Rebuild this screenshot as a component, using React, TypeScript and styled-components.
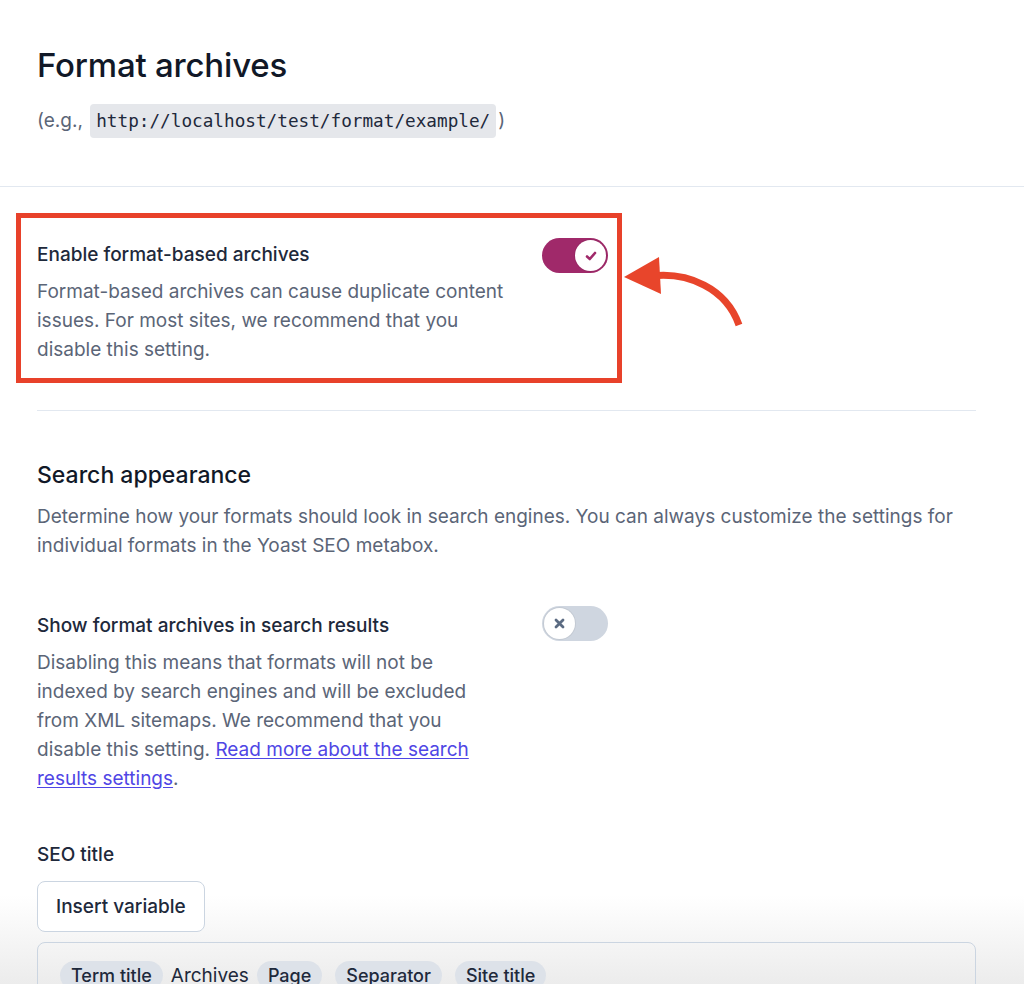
import React from "react";
import styled, { createGlobalStyle } from "styled-components";

const Global = createGlobalStyle`
  html, body { margin: 0; padding: 0; background: #ffffff; }
  body { font-family: Inter, "Noto Sans", sans-serif; color: #1e293b; -webkit-font-smoothing: antialiased; }
  * { box-sizing: border-box; }
`;

const Page = styled.div`
  width: 1024px;
  height: 984px;
  overflow: hidden;
  background: linear-gradient(to bottom, #ffffff 0px, #ffffff 895px, #ececec 984px);
`;

const Header = styled.header`
  padding: 44px 48px 48px 37px;
  border-bottom: 1px solid #e2e8f0;
`;

const Title = styled.h1`
  margin: 0 0 18px;
  font-size: 33px;
  line-height: 42px;
  font-weight: 500;
  color: #111827;
  letter-spacing: -0.2px;
`;

const Example = styled.p`
  margin: 0;
  font-size: 19px;
  line-height: 34px;
  color: #5b6577;
`;

const Code = styled.code`
  font-family: "DejaVu Sans Mono", "Liberation Mono", monospace;
  font-size: 17.7px;
  color: #1e293b;
  background: #e5e7eb;
  border-radius: 4px;
  padding: 7px 6px;
  margin: 0 2px;
`;

const Content = styled.main`
  padding: 26px 48px 0 37px;
`;

const Highlight = styled.div`
  position: relative;
  margin-left: -21px;
  width: 606px;
  border: 5px solid #e8412a;
  padding: 20px 9px 14px 16px;
`;

const Arrow = styled.svg`
  position: absolute;
  left: 597px;
  top: 30px;
  overflow: visible;
`;

const Row = styled.div`
  display: flex;
  align-items: flex-start;
  justify-content: space-between;
  width: 571px;
`;

const RowText = styled.div`
  width: 470px;
`;

const Label = styled.div`
  font-size: 19px;
  line-height: 34px;
  font-weight: 500;
  color: #1e293b;
  margin-bottom: 5px;
`;

const Desc = styled.p`
  margin: 0;
  font-size: 19px;
  line-height: 29px;
  color: #5b6577;
`;

const Link = styled.a`
  color: #4f46e5;
  text-decoration: underline;
  text-underline-offset: 2px;
`;

const Track = styled.span<{ $on: boolean; $shift?: number }>`
  flex: none;
  display: inline-flex;
  align-items: center;
  justify-content: ${(p) => (p.$on ? "flex-end" : "flex-start")};
  width: 66px;
  height: 35px;
  border-radius: 18px;
  padding: 2px;
  margin-top: ${(p) => p.$shift ?? 0}px;
  background: ${(p) => (p.$on ? "#a0296a" : "#cfd6e0")};
`;

const Knob = styled.span`
  display: flex;
  align-items: center;
  justify-content: center;
  width: 31px;
  height: 31px;
  border-radius: 50%;
  background: #ffffff;
  box-shadow: 0 0 0 1px rgba(0, 0, 0, 0.06);
`;

const Divider = styled.hr`
  border: none;
  border-top: 1px solid #e2e8f0;
  margin: 27px 0 48px;
`;

const SectionTitle = styled.h2`
  margin: 0 0 11px;
  font-size: 23px;
  line-height: 32px;
  font-weight: 500;
  color: #111827;
`;

const Section = styled.section`
  margin-bottom: 49px;
`;

const FieldLabel = styled.div`
  font-size: 19px;
  line-height: 28px;
  font-weight: 500;
  color: #1e293b;
  margin: 48px 0 12px;
`;

const Button = styled.button`
  font-family: inherit;
  font-size: 19px;
  font-weight: 500;
  color: #1e293b;
  background: #ffffff;
  border: 1.5px solid #cbd5e1;
  border-radius: 8px;
  height: 51px;
  padding: 0 18px;
  margin-bottom: 10px;
`;

const Editor = styled.div`
  width: 939px;
  border: 1.5px solid #cbd5e1;
  border-radius: 8px;
  padding: 18px 22px 16px;
  display: flex;
  align-items: center;
  gap: 8px;
  font-size: 18px;
  line-height: 29px;
  color: #1e293b;
`;

const Pill = styled.span`
  background: #dde2e9;
  border-radius: 15px;
  padding: 0 11px;
  font-weight: 500;
  & + & {
    margin-left: 5px;
  }
`;

const Plain = styled.span`
  font-size: 19px;
`;

const Toggle = ({ on, shift }: { on: boolean; shift?: number }) => (
  <Track $on={on} $shift={shift}>
    <Knob>
      {on ? (
        <svg width="14" height="14" viewBox="0 0 14 14">
          <path d="M3 7.5 L5.8 10 L11 4" fill="none" stroke="#a0296a" strokeWidth="2.6" strokeLinecap="round" strokeLinejoin="round" />
        </svg>
      ) : (
        <svg width="13" height="13" viewBox="0 0 13 13">
          <path d="M3 3 L10 10 M10 3 L3 10" fill="none" stroke="#5b6b82" strokeWidth="2.8" strokeLinecap="round" />
        </svg>
      )}
    </Knob>
  </Track>
);

export default function App() {
  return (
    <Page>
      <Global />
      <Header>
        <Title>Format archives</Title>
        <Example>
          (e.g., <Code>http://localhost/test/format/example/</Code>)
        </Example>
      </Header>
      <Content>
        <Highlight>
          <Row>
            <RowText>
              <Label>Enable format-based archives</Label>
              <Desc>
                Format-based archives can cause duplicate content issues. For most sites, we recommend that you disable
                this setting.
              </Desc>
            </RowText>
            <Toggle on />
          </Row>
          <Arrow width="130" height="90" viewBox="0 0 130 90">
            <path d="M34 28 C70 24, 108 40, 121 77" fill="none" stroke="#e8452b" strokeWidth="7" strokeLinecap="butt" />
            <polygon points="6,29 41,9 43,46" fill="#e8452b" />
          </Arrow>
        </Highlight>
        <Divider />
        <Section>
          <SectionTitle>Search appearance</SectionTitle>
          <Desc>
            Determine how your formats should look in search engines. You can always customize the settings for individual
            formats in the Yoast SEO metabox.
          </Desc>
        </Section>
        <Row>
          <RowText>
            <Label>Show format archives in search results</Label>
            <Desc>
              Disabling this means that formats will not be indexed by search engines and will be excluded from XML
              sitemaps. We recommend that you disable this setting.{" "}
              <Link href="#">Read more about the search results settings</Link>.
            </Desc>
          </RowText>
          <Toggle on={false} shift={-3} />
        </Row>
        <FieldLabel>SEO title</FieldLabel>
        <Button>Insert variable</Button>
        <Editor>
          <Pill>Term title</Pill>
          <Plain>Archives</Plain>
          <Pill>Page</Pill>
          <Pill>Separator</Pill>
          <Pill>Site title</Pill>
        </Editor>
      </Content>
    </Page>
  );
}
